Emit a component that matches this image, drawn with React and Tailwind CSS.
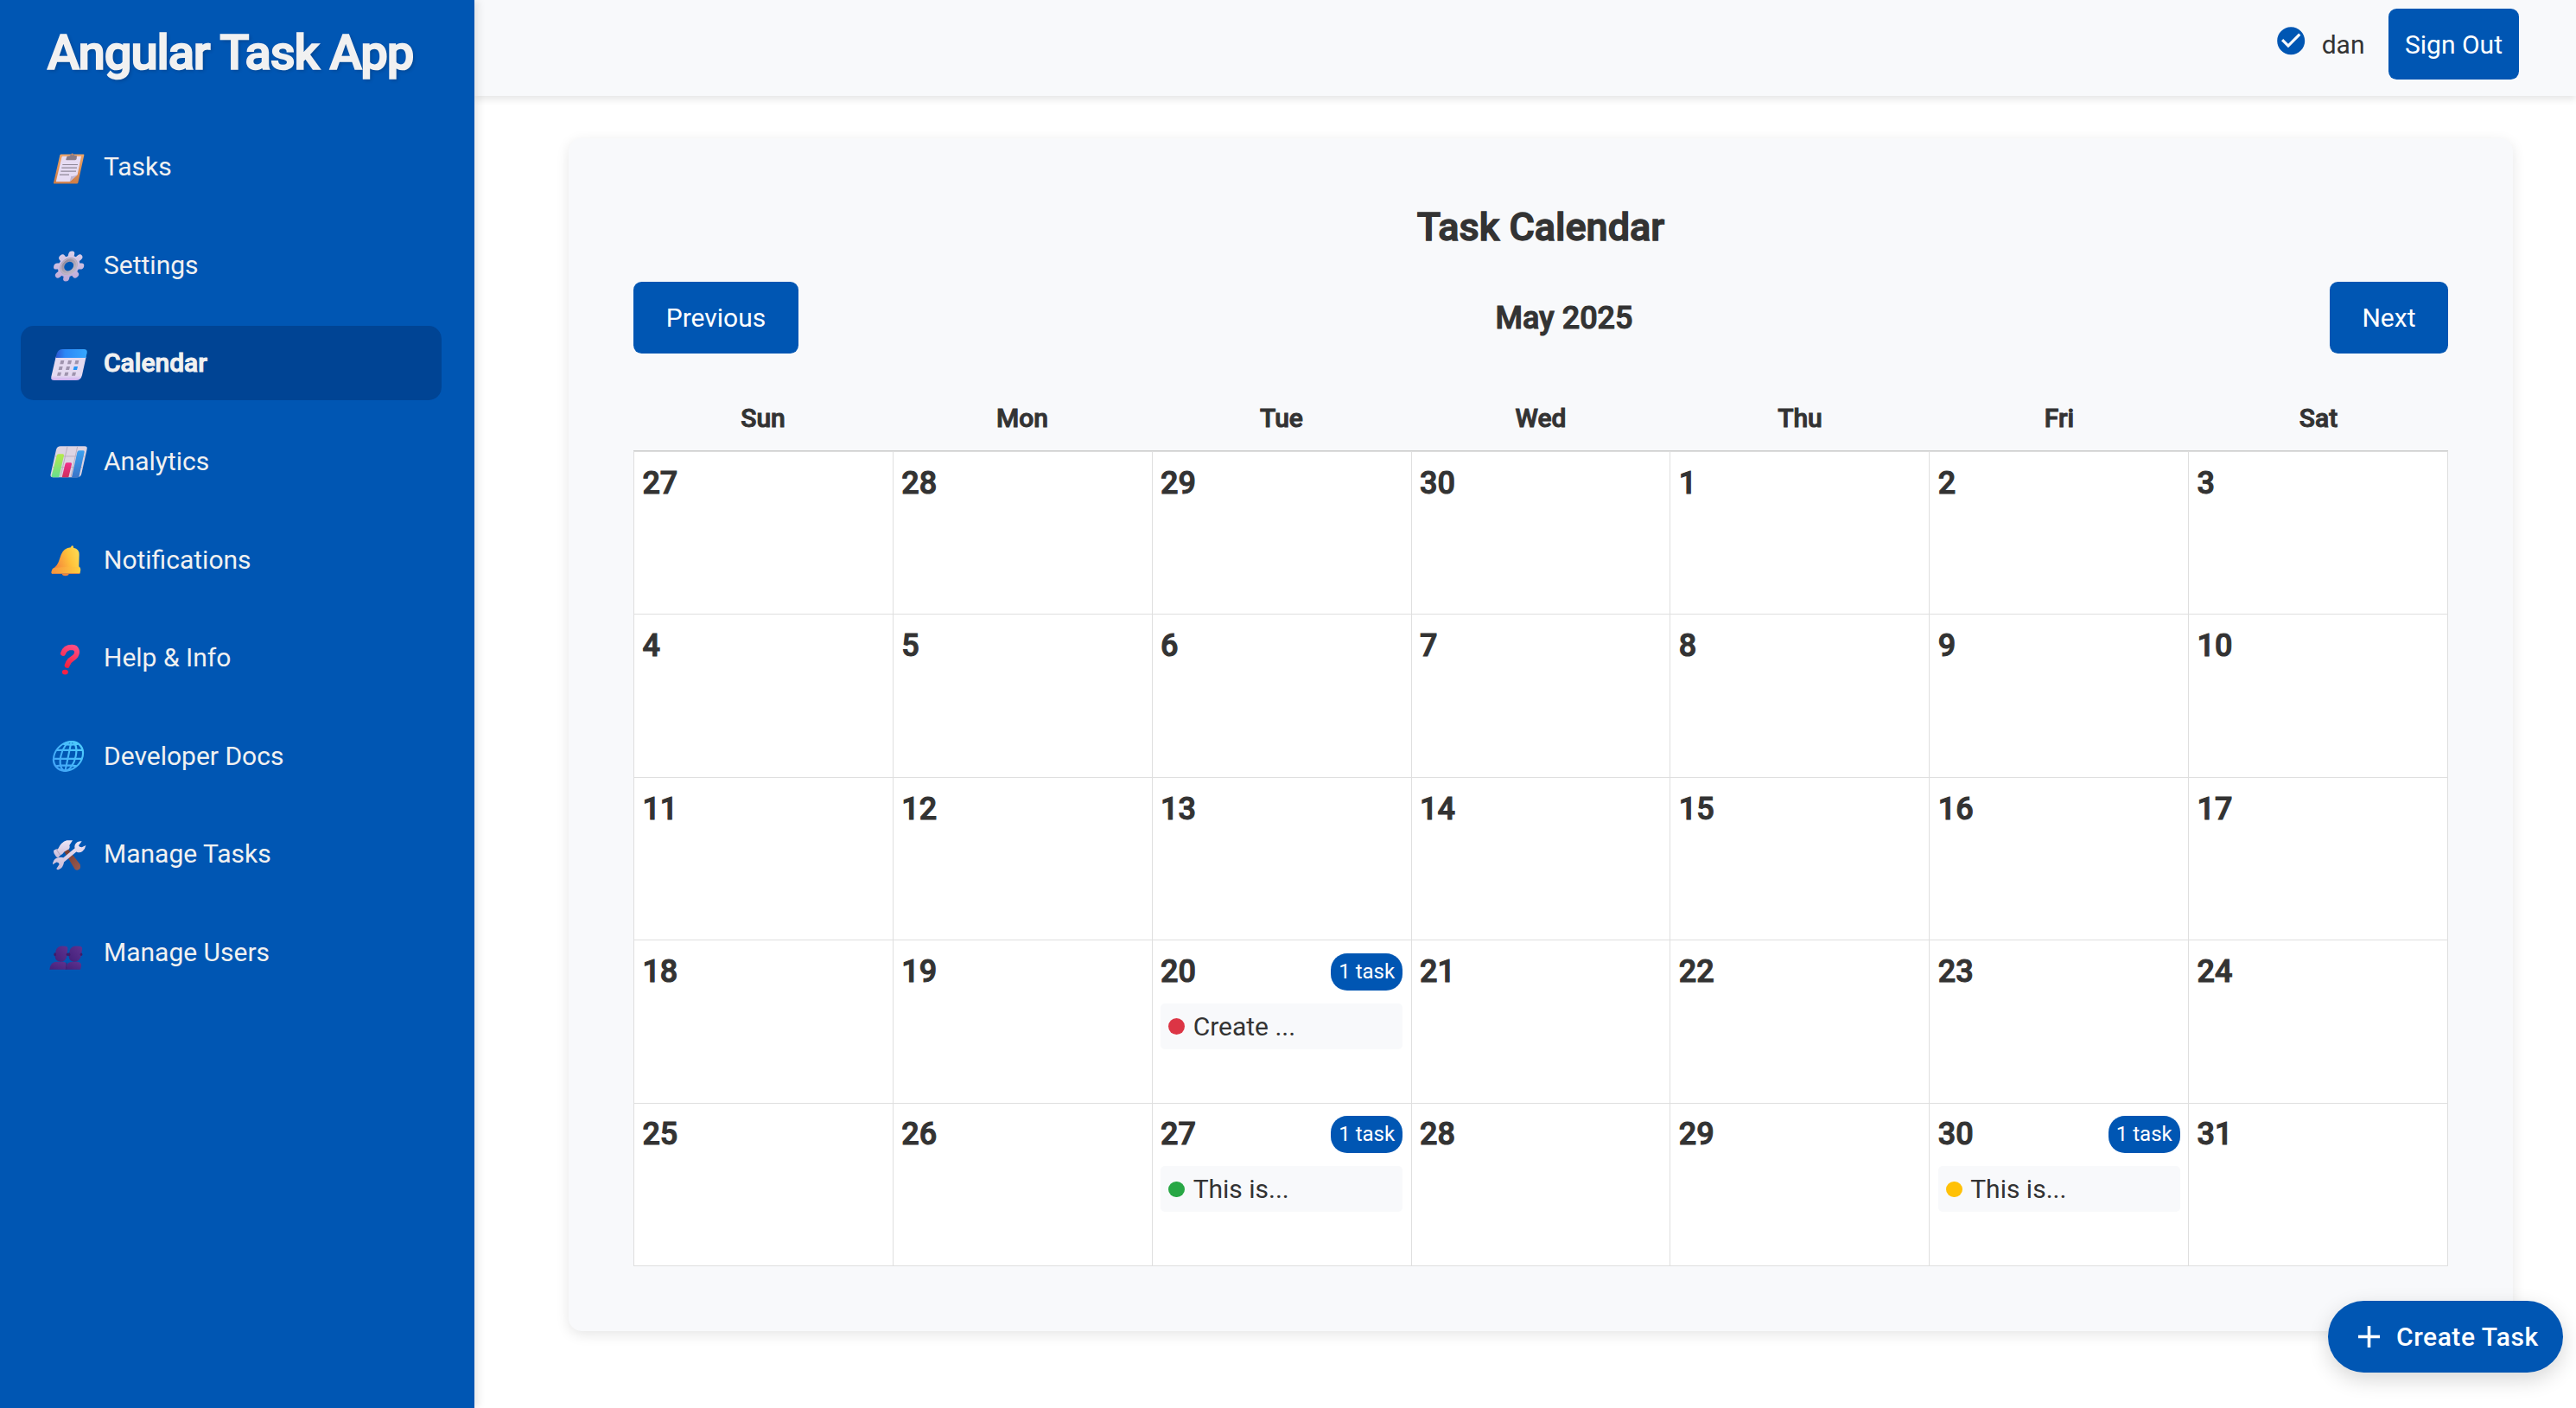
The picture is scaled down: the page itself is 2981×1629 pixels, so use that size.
import React from 'react';

function ClipboardIcon() {
  return (
    <svg className="h-[60px] w-12 shrink-0" viewBox="45 7.5 144 180">
      <defs>
        <linearGradient id="board" x1="0" y1="0" x2="0" y2="1">
          <stop offset="0" stopColor="#eca468" />
          <stop offset="1" stopColor="#cf7d45" />
        </linearGradient>
      </defs>
      <path d="M92 57 L170 57 Q173 57 172 60 L151 156 Q150 159 147 159 L68 159 Q65 159 66 156 L88 60 Q89 57 92 57Z" fill="url(#board)" />
      <path d="M98 64 L162 64 L149 128 L122 152 L76 152 Q74 152 75 149 L94 68 Q95 64 98 64Z" fill="#e6dcf3" />
      <path d="M149 128 L122 152 L127 133 Q136 134 149 128Z" fill="#bfb2cc" />
      <path d="M113 64 L123 62 Q125 53 131 53 Q137 53 138 61 L147 62 L146 73 Q145 77 141 77 L111 77 Q108 77 109 74Z" fill="#8a7c87" />
      <circle cx="131" cy="58" r="3" fill="#c98a62" />
      <path d="M97 93H150M94 104H147M91 116H144M87 128H120" stroke="#8f8798" strokeWidth="3.4" />
    </svg>
  );
}

function GearIcon() {
  return (
    <svg className="h-[60px] w-12 shrink-0" viewBox="45 348.75 144 180">
      <defs>
        <linearGradient id="gear" x1="0" y1="-52" x2="0" y2="52" gradientUnits="userSpaceOnUse">
          <stop offset="0" stopColor="#d9cfe8" />
          <stop offset="1" stopColor="#bda9d8" />
        </linearGradient>
        <linearGradient id="gearRing" x1="0" y1="0" x2="1" y2="1">
          <stop offset="0" stopColor="#8d8598" />
          <stop offset="1" stopColor="#c4bccd" />
        </linearGradient>
      </defs>
      <g transform="translate(119 445) skewX(-12)">
        <g stroke="url(#gear)" strokeWidth="21" strokeLinecap="round">
          <path d="M.1 -42L0 -30M0 30L.1 42M-42 .1L-30 0M30 0L42 .1M-30 -30L-22 -22M30 -30L22 -22M-30 30L-22 22M30 30L22 22" />
        </g>
        <circle r="28" fill="none" stroke="url(#gear)" strokeWidth="18" />
        <circle r="23" fill="none" stroke="url(#gearRing)" strokeWidth="14" />
        <circle r="27" fill="none" stroke="#bdb4c6" strokeWidth="4" />
      </g>
    </svg>
  );
}

function CalendarIcon() {
  return (
    <svg className="h-[60px] w-12 shrink-0" viewBox="45 690 144 180">
      <defs>
        <linearGradient id="calTop" x1="0" y1="0" x2="1" y2="0">
          <stop offset="0" stopColor="#2c55cf" />
          <stop offset=".3" stopColor="#2b87f6" />
          <stop offset="1" stopColor="#36a8ff" />
        </linearGradient>
        <linearGradient id="calBody" x1="0" y1="0" x2="0" y2="1">
          <stop offset=".8" stopColor="#e4daf0" />
          <stop offset="1" stopColor="#cfaef0" />
        </linearGradient>
      </defs>
      <path d="M74 758 L179 758 L165 822 Q161 840 144 840 L68 840 Q55 840 58 827Z" fill="url(#calBody)" />
      <path d="M73 762 L77 748 Q82 732 98 732 L171 732 Q184 732 182 745 L178 762Z" fill="url(#calTop)" />
      <g fill="#9f94ad">
        <path d="M91 771h12l-3 13h-12zM117 771h12l-3 13h-12zM142 771h12l-3 13h-12zM86 792h12l-3 12h-12zM111 792h12l-3 12h-12zM81 812h12l-3 12h-12zM106 812h12l-3 12h-12zM132 812h12l-3 12h-12z" />
      </g>
      <path d="M137 792h13l-3 12h-13z" fill="#2795f5" />
    </svg>
  );
}

function ChartIcon() {
  return (
    <svg className="h-[60px] w-12 shrink-0" viewBox="45 1031.25 144 180">
      <defs>
        <linearGradient id="barGreen" x1="0" y1="0" x2="0" y2="1">
          <stop offset="0" stopColor="#b5ea4a" />
          <stop offset="1" stopColor="#67e08f" />
        </linearGradient>
        <linearGradient id="barRed" x1="0" y1="0" x2="0" y2="1">
          <stop offset="0" stopColor="#f0308a" />
          <stop offset="1" stopColor="#cf2f5c" />
        </linearGradient>
        <linearGradient id="barBlue" x1="0" y1="0" x2="0" y2="1">
          <stop offset="0" stopColor="#3aa0f0" />
          <stop offset="1" stopColor="#3a74c8" />
        </linearGradient>
      </defs>
      <path d="M90 1071 L174 1071 Q184 1071 182 1081 L163 1166 Q160 1179 147 1179 L64 1179 Q53 1179 56 1168 L75 1083 Q78 1071 90 1071Z" fill="#ddd4e2" />
      <path d="M114 1072L90 1178M149 1072L126 1178M71 1106H174M62 1144H166" stroke="#bbb0c2" strokeWidth="3" />
      <path d="M84 1098h14q5 0 4 5L85 1179H63q-5 0-4-5L77 1104q1-6 7-6z" fill="url(#barGreen)" />
      <path d="M112 1128h13q5 0 4 5l-11 46H95l11-45q1-6 6-6z" fill="url(#barRed)" />
      <path d="M155 1086h14q5 0 4 5l-19 88H129l19-87q1-6 7-6z" fill="url(#barBlue)" />
    </svg>
  );
}

function BellIcon() {
  return (
    <svg className="h-[60px] w-12 shrink-0" viewBox="45 -7.4 144 177.5" preserveAspectRatio="none">
      <defs>
        <linearGradient id="bell" x1="0" y1=".3" x2="1" y2="0">
          <stop offset="0" stopColor="#f58a3c" />
          <stop offset=".5" stopColor="#ffc23a" />
          <stop offset="1" stopColor="#ffe25c" />
        </linearGradient>
        <linearGradient id="bellRim" x1="0" y1="0" x2="1" y2="0">
          <stop offset="0" stopColor="#f7923e" />
          <stop offset="1" stopColor="#ffcf3f" />
        </linearGradient>
      </defs>
      <ellipse cx="107" cy="131" rx="12" ry="7" fill="#f0853f" />
      <path d="M126 41 Q127 35 131 35 Q136 35 135 42 Q156 46 155 66 L154 106 Q156 110 159 113 L158 120 H62 L64 114 Q80 103 85 86 L92 66 Q101 43 126 41Z" fill="url(#bell)" />
      <path d="M66 112 Q110 104 157 109 L160 117 L158 128 Q157 131 153 131 H62 Q57 131 58 126 L60 119 Q61 114 66 112Z" fill="url(#bellRim)" />
      <path d="M60 130H157" stroke="#d98a4a" strokeWidth="3" />
    </svg>
  );
}

function QuestionIcon() {
  return (
    <svg className="h-[60px] w-12 shrink-0" viewBox="45 329.1 144 177.5" preserveAspectRatio="none">
      <defs>
        <linearGradient id="question" x1="140" y1="375" x2="105" y2="455" gradientUnits="userSpaceOnUse">
          <stop offset="0" stopColor="#ff4f86" />
          <stop offset="1" stopColor="#f01c38" />
        </linearGradient>
      </defs>
      <path d="M99 403 C104 388 117 382 130 382 C149 383 150 400 143 411 C135 423 117 423 113 444" fill="none" stroke="url(#question)" strokeWidth="18" strokeLinecap="round" />
      <ellipse cx="106" cy="467" rx="10.5" ry="8.5" fill="#f42246" />
    </svg>
  );
}

function GlobeIcon() {
  return (
    <svg className="h-[60px] w-12 shrink-0" viewBox="45 665.6 144 177.5" preserveAspectRatio="none">
      <defs>
        <linearGradient id="globe" x1="-50" y1="50" x2="50" y2="-50" gradientUnits="userSpaceOnUse">
          <stop offset="0" stopColor="#3f9cf5" />
          <stop offset="1" stopColor="#4fd2ff" />
        </linearGradient>
      </defs>
      <g transform="translate(117 757) skewX(-12)" fill="none" stroke="url(#globe)" strokeWidth="6.5">
        <ellipse rx="50" ry="50" />
        <ellipse rx="26" ry="50" />
        <path d="M0 -50L.1 50M-45 -21H45M-49 9H49M-36 34Q0 28 36 34M-26 -42Q0 -37 26 -42" />
      </g>
    </svg>
  );
}

function ToolsIcon() {
  return (
    <svg className="h-[60px] w-12 shrink-0" viewBox="45 1002 144 177.5" preserveAspectRatio="none">
      <defs>
        <linearGradient id="handle" x1="0" y1="0" x2="1" y2="1">
          <stop offset="0" stopColor="#6f3a30" />
          <stop offset="1" stopColor="#9a5a50" />
        </linearGradient>
        <linearGradient id="steel" x1="0" y1="0" x2="0" y2="1">
          <stop offset="0" stopColor="#eee6f6" />
          <stop offset="1" stopColor="#c9bbd8" />
        </linearGradient>
      </defs>
      <path d="M101 1080 L115 1072 L158 1126 Q161 1136 157 1142 Q148 1150 140 1143Z" fill="url(#handle)" />
      <path d="M66 1079 L76 1074 Q78 1076 82 1072 Q92 1050 112 1044 L132 1044 L121 1061 Q124 1067 120 1074 L103 1083 Q98 1091 90 1095 L82 1103 Q77 1104 74 1099 L67 1088Z" fill="url(#steel)" />
      <path d="M76 1075 L89 1095" stroke="#b3a5c0" strokeWidth="3" />
      <path d="M164 1047 Q146 1046 140 1060 Q138 1067 140 1071 L100 1103 Q90 1100 77 1105 Q64 1110 63 1127 L76 1119 Q84 1119 86 1126 L76 1141 Q78 1146 84 1144 Q100 1138 102 1119 L145 1083 Q156 1089 166 1082 Q176 1074 178 1061 L164 1068 Q155 1068 153 1062Z" fill="url(#steel)" />
    </svg>
  );
}

function UsersIcon() {
  return (
    <svg className="h-[60px] w-12 shrink-0" viewBox="45 1338.5 144 177.5" preserveAspectRatio="none">
      <defs>
        <linearGradient id="people" x1="0" y1="1" x2="1" y2="0">
          <stop offset="0" stopColor="#43207a" />
          <stop offset="1" stopColor="#5f3390" />
        </linearGradient>
      </defs>
      <g fill="url(#people)">
        <path d="M110 1486 L111 1476 Q112 1460 132 1459 L148 1459 Q164 1461 162 1474 L159 1486Z" />
        <path d="M52 1486 L54 1476 Q58 1461 76 1459 L100 1459 Q112 1461 112 1474 L110 1486Z" />
        <path d="M122 1420 Q128 1405 144 1405 L158 1406 Q167 1408 165 1418 L161 1441 Q155 1459 137 1459 Q119 1457 119 1440Z" />
        <path d="M74 1420 Q80 1405 96 1405 L108 1406 Q117 1408 115 1418 L112 1441 Q107 1459 90 1459 Q71 1457 71 1440Z" />
      </g>
      <g fill="#3f1c68">
        <ellipse cx="71" cy="1434" rx="4" ry="6" />
        <ellipse cx="114" cy="1434" rx="4" ry="5" />
        <ellipse cx="120" cy="1434" rx="4" ry="6" />
        <ellipse cx="162" cy="1434" rx="4" ry="5" />
      </g>
      <path d="M111 1462L109 1486" stroke="#3a1a66" strokeWidth="2" />
    </svg>
  );
}

const NAV = [
  ['Tasks', ClipboardIcon],
  ['Settings', GearIcon],
  ['Calendar', CalendarIcon],
  ['Analytics', ChartIcon],
  ['Notifications', BellIcon],
  ['Help & Info', QuestionIcon],
  ['Developer Docs', GlobeIcon],
  ['Manage Tasks', ToolsIcon],
  ['Manage Users', UsersIcon],
];

const WEEKDAYS = ['Sun', 'Mon', 'Tue', 'Wed', 'Thu', 'Fri', 'Sat'];

// The five visible weeks start on April 27.
const DAYS = Array.from({ length: 35 }, (_, i) => ({ key: i, day: i < 4 ? 27 + i : i - 3 }));

const TASKS = {
  23: { title: 'Create ...', dot: 'bg-[#dc3545]' },
  30: { title: 'This is...', dot: 'bg-[#28a745]' },
  33: { title: 'This is...', dot: 'bg-[#ffc107]' },
};

function Sidebar() {
  return (
    <aside className="relative z-20 flex w-[549px] shrink-0 flex-col bg-[#0056b3] pr-[38px] pl-6 text-[#f1f1f1] shadow-[4px_0_9px_rgba(0,0,0,0.1)]">
      <h1 className="flex h-[122px] items-center justify-center pr-[2px] text-[56.25px] leading-none font-medium tracking-[-1.15px] whitespace-nowrap [-webkit-text-stroke:1.7px_#f1f1f1] [text-shadow:2px_2px_4px_rgba(0,0,0,0.2)]">
        Angular Task App
      </h1>
      <nav className="mt-[27.6px] flex flex-col gap-[27.9px]">
        {NAV.map(([label, Icon]) => (
          <a
            key={label}
            className={
              label === 'Calendar'
                ? 'flex h-[85.75px] items-center gap-[17px] rounded-[15px] bg-[#004494] pl-[31px] text-[30px] font-medium [-webkit-text-stroke:1px_#f1f1f1]'
                : 'flex h-[85.75px] items-center gap-[17px] rounded-[15px] pl-[31px] text-[30px]'
            }
          >
            <Icon />
            <span>{label}</span>
          </a>
        ))}
      </nav>
    </aside>
  );
}

function Header() {
  return (
    <header className="relative z-10 flex h-[111px] shrink-0 items-start justify-end bg-[#f8f9fb] pt-[10px] pr-[66px] text-[30px] shadow-[0_4px_8px_rgba(0,0,0,0.1)]">
      <svg className="mt-[17.8px] mr-[16px] h-[38.4px] w-[38.4px]" viewBox="0 0 24 24" fill="#0056b3">
        <path d="M12 2C6.48 2 2 6.48 2 12s4.48 10 10 10 10-4.48 10-10S17.52 2 12 2zm-2 15l-5-5 1.41-1.41L10 14.17l7.59-7.59L19 8l-9 9z" />
      </svg>
      <span className="mr-[27.5px] leading-[84px]">dan</span>
      <button className="h-[82px] w-[151px] rounded-[9.4px] bg-[#0056b3] leading-[84px] text-white">Sign Out</button>
    </header>
  );
}

function DayCell({ day, task }) {
  return (
    <div className="flex min-w-0 flex-col border-b border-l border-[#dfdfdf] bg-white px-[9.4px] pt-[14.8px]">
      <div className="flex h-[43px] items-center justify-between">
        <span className="text-[36px] leading-[43px] font-medium [-webkit-text-stroke:1.1px_#333]">{day}</span>
        {task && (
          <span className="h-[43px] w-[83px] rounded-[19px] bg-[#0056b3] text-center text-[24px] leading-[43px] text-white">1 task</span>
        )}
      </div>
      {task && (
        <div className="mt-[15px] flex h-[53px] items-center rounded-[5px] bg-[#f8f9fb] pl-[9.4px] text-[30px] leading-[53px]">
          <span className={`mr-[9.4px] size-[18.75px] rounded-full ${task.dot}`} />
          <span>{task.title}</span>
        </div>
      )}
    </div>
  );
}

function CalendarCard() {
  return (
    <section className="mt-[49px] ml-[109px] h-[1380px] w-[2250px] rounded-[15px] bg-[#f8f9fb] px-[75px] pt-[75px] shadow-[0_4px_15px_rgba(0,0,0,0.1)]">
      <h2 className="h-[56px] text-center text-[45px] leading-[56px] font-medium [-webkit-text-stroke:1.4px_#333]">Task Calendar</h2>
      <div className="mt-[35px] flex h-[83px] items-center justify-between">
        <button className="h-[83px] w-[191px] rounded-[9.4px] bg-[#0056b3] text-[30px] text-white">Previous</button>
        <h3 className="text-[36px] font-medium [-webkit-text-stroke:1.1px_#333]">May 2025</h3>
        <button className="h-[83px] w-[137px] rounded-[9.4px] bg-[#0056b3] text-[30px] text-white">Next</button>
      </div>
      <div className="mt-[37px] grid h-[76px] grid-cols-7 border-b border-[#ccc] text-center text-[30px] leading-[75px] font-medium [-webkit-text-stroke:1px_#333]">
        {WEEKDAYS.map((d) => (
          <span key={d}>{d}</span>
        ))}
      </div>
      <div className="grid h-[943px] grid-cols-7 grid-rows-5 border-t border-r border-[#dfdfdf]">
        {DAYS.map((d) => (
          <DayCell key={d.key} day={d.day} task={TASKS[d.key]} />
        ))}
      </div>
    </section>
  );
}

export default function App() {
  return (
    <div className="relative flex h-[1629px] w-[2981px] overflow-hidden bg-white font-['Roboto',sans-serif] text-[#333]">
      <Sidebar />
      <main className="flex flex-1 flex-col">
        <Header />
        <CalendarCard />
      </main>
      <button className="absolute right-[15px] bottom-[41px] z-30 flex h-[83px] w-[272px] items-center gap-[10px] rounded-full bg-[#0056b3] pl-[26px] text-[30px] font-medium tracking-[0.55px] whitespace-nowrap text-white shadow-[0_8px_24px_rgba(0,0,0,0.16)]">
        <svg className="size-[43px] shrink-0" viewBox="0 0 24 24" fill="currentColor">
          <path d="M19 13h-6v6h-2v-6H5v-2h6V5h2v6h6v2z" />
        </svg>
        Create Task
      </button>
    </div>
  );
}
